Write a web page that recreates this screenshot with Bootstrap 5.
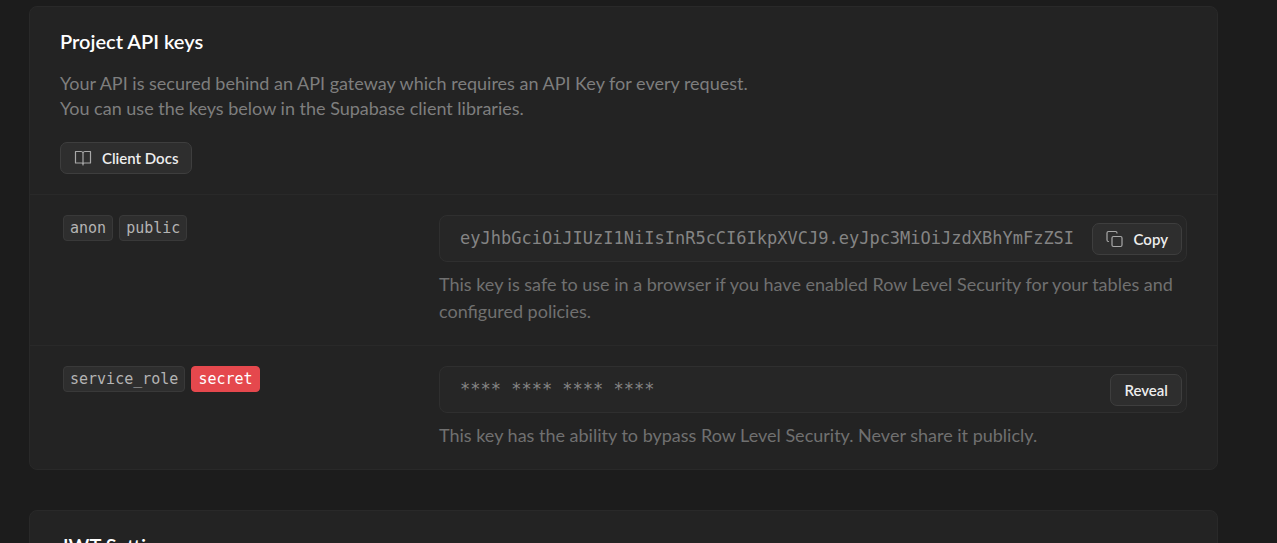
<!DOCTYPE html>
<html lang="en" data-bs-theme="dark">
<head>
<meta charset="utf-8">
<meta name="viewport" content="width=device-width, initial-scale=1">
<title>API Settings</title>
<link href="https://cdn.jsdelivr.net/npm/bootstrap@5.3.0/dist/css/bootstrap.min.css" rel="stylesheet">
<style>
  body { background: #1c1c1c; color: #ededed; font-family: Lato, "Liberation Sans", sans-serif; font-size: 18px; }
  .settings-page { padding: 6px 59px 0 29px; gap: 40px; }
  .panel { background: #232323; border: 1px solid #292929; border-radius: 8px; }
  .panel-head { padding: 20px 30px; }
  .panel-title { font-size: 20px; line-height: 28px; font-weight: 600; margin-bottom: 16px; }
  .panel-text { color: #7e7e7e; line-height: 25px; margin-bottom: 21px; }
  .key-row { border-top: 1px solid #292929; padding: 20px 30px; }
  .key-grid { --bs-gutter-x: 10px; }
  .btn-panel {
    --bs-btn-color: #ededed; --bs-btn-bg: #2e2e2e; --bs-btn-border-color: #3e3e3e;
    --bs-btn-hover-color: #fff; --bs-btn-hover-bg: #393939; --bs-btn-hover-border-color: #505050;
    --bs-btn-font-size: 15px; --bs-btn-font-weight: 600; --bs-btn-line-height: 20px;
    --bs-btn-padding-x: 13px; --bs-btn-padding-y: 5px; --bs-btn-border-radius: 7px;
    gap: 10px;
  }
  .btn-panel svg { color: #a8a8a8; }
  .key-tags { gap: 6px; padding-left: 3px; }
  .key-tag {
    font-family: "DejaVu Sans Mono", monospace; font-size: 15px; line-height: 24px; color: #b4b4b4;
    background: #2e2e2e; border: 1px solid #393939; border-radius: 4px; padding: 0 6px;
  }
  .key-tag.secret { color: #fff; background: #e5484d; border-color: #e5484d; }
  .key-box { background: #262626; border: 1px solid #2f2f2f; border-radius: 8px; padding: 7px 4px 7px 20px; height: 47px; }
  .key-input {
    font-family: "DejaVu Sans Mono", monospace; font-size: 17px; line-height: 31px; color: #848484;
    background: none; border: 0; outline: 0; padding: 0; min-width: 0;
  }
  .key-help { color: #707070; line-height: 27px; margin: 9px 0 0; }
</style>
</head>
<body class="vh-100 overflow-hidden">
<main class="settings-page d-flex flex-column">
  <section class="panel">
    <div class="panel-head">
      <h2 class="panel-title">Project API keys</h2>
      <p class="panel-text">Your API is secured behind an API gateway which requires an API Key for every request.<br>You can use the keys below in the Supabase client libraries.</p>
      <button type="button" class="btn btn-panel d-inline-flex align-items-center">
        <svg width="18" height="18" viewBox="0 0 18 18" fill="none" stroke="currentColor" stroke-width="1.2" stroke-linejoin="round" stroke-linecap="round" aria-hidden="true"><path d="M9 4.500c0-1.100-.9-2-2-2H1.500v11.500h6c.8 0 1.500.7 1.500 1.500M9 4.500c0-1.100.9-2 2-2h5.500v11.500h-6c-.8 0-1.500.7-1.500 1.500M9 4.500V16"/></svg>
        Client Docs
      </button>
    </div>
    <div class="key-row">
      <div class="row key-grid">
        <label class="col-4" for="anon-key"><span class="key-tags d-flex flex-wrap"><span class="key-tag">anon</span><span class="key-tag">public</span></span></label>
        <div class="col-8">
          <div class="key-box d-flex align-items-center">
            <input id="anon-key" class="key-input flex-grow-1" type="text" readonly value="eyJhbGciOiJIUzI1NiIsInR5cCI6IkpXVCJ9.eyJpc3MiOiJzdXBhYmFzZSI">
            <button type="button" class="btn btn-panel d-inline-flex align-items-center">
              <svg width="18" height="18" viewBox="0 0 18 18" fill="none" stroke="currentColor" stroke-width="1.2" stroke-linejoin="round" stroke-linecap="round" aria-hidden="true"><rect x="6" y="6.500" width="10" height="10" rx="1.500"/><path d="M2.500 11.500c-.8 0-1.500-.7-1.500-1.500V3c0-.8.7-1.500 1.500-1.500h7c.8 0 1.500.7 1.500 1.500"/></svg>
              Copy
            </button>
          </div>
          <p class="key-help">This key is safe to use in a browser if you have enabled Row Level Security for your tables and configured policies.</p>
        </div>
      </div>
    </div>
    <div class="key-row">
      <div class="row key-grid">
        <label class="col-4" for="service-key"><span class="key-tags d-flex flex-wrap"><span class="key-tag">service_role</span><span class="key-tag secret">secret</span></span></label>
        <div class="col-8">
          <div class="key-box d-flex align-items-center">
            <input id="service-key" class="key-input flex-grow-1" type="text" readonly value="**** **** **** ****">
            <button type="button" class="btn btn-panel">Reveal</button>
          </div>
          <p class="key-help">This key has the ability to bypass Row Level Security. Never share it publicly.</p>
        </div>
      </div>
    </div>
  </section>
  <section class="panel">
    <div class="panel-head">
      <h2 class="panel-title">JWT Settings</h2>
    </div>
  </section>
</main>
<script src="https://cdn.jsdelivr.net/npm/bootstrap@5.3.0/dist/js/bootstrap.bundle.min.js"></script>
</body>
</html>
